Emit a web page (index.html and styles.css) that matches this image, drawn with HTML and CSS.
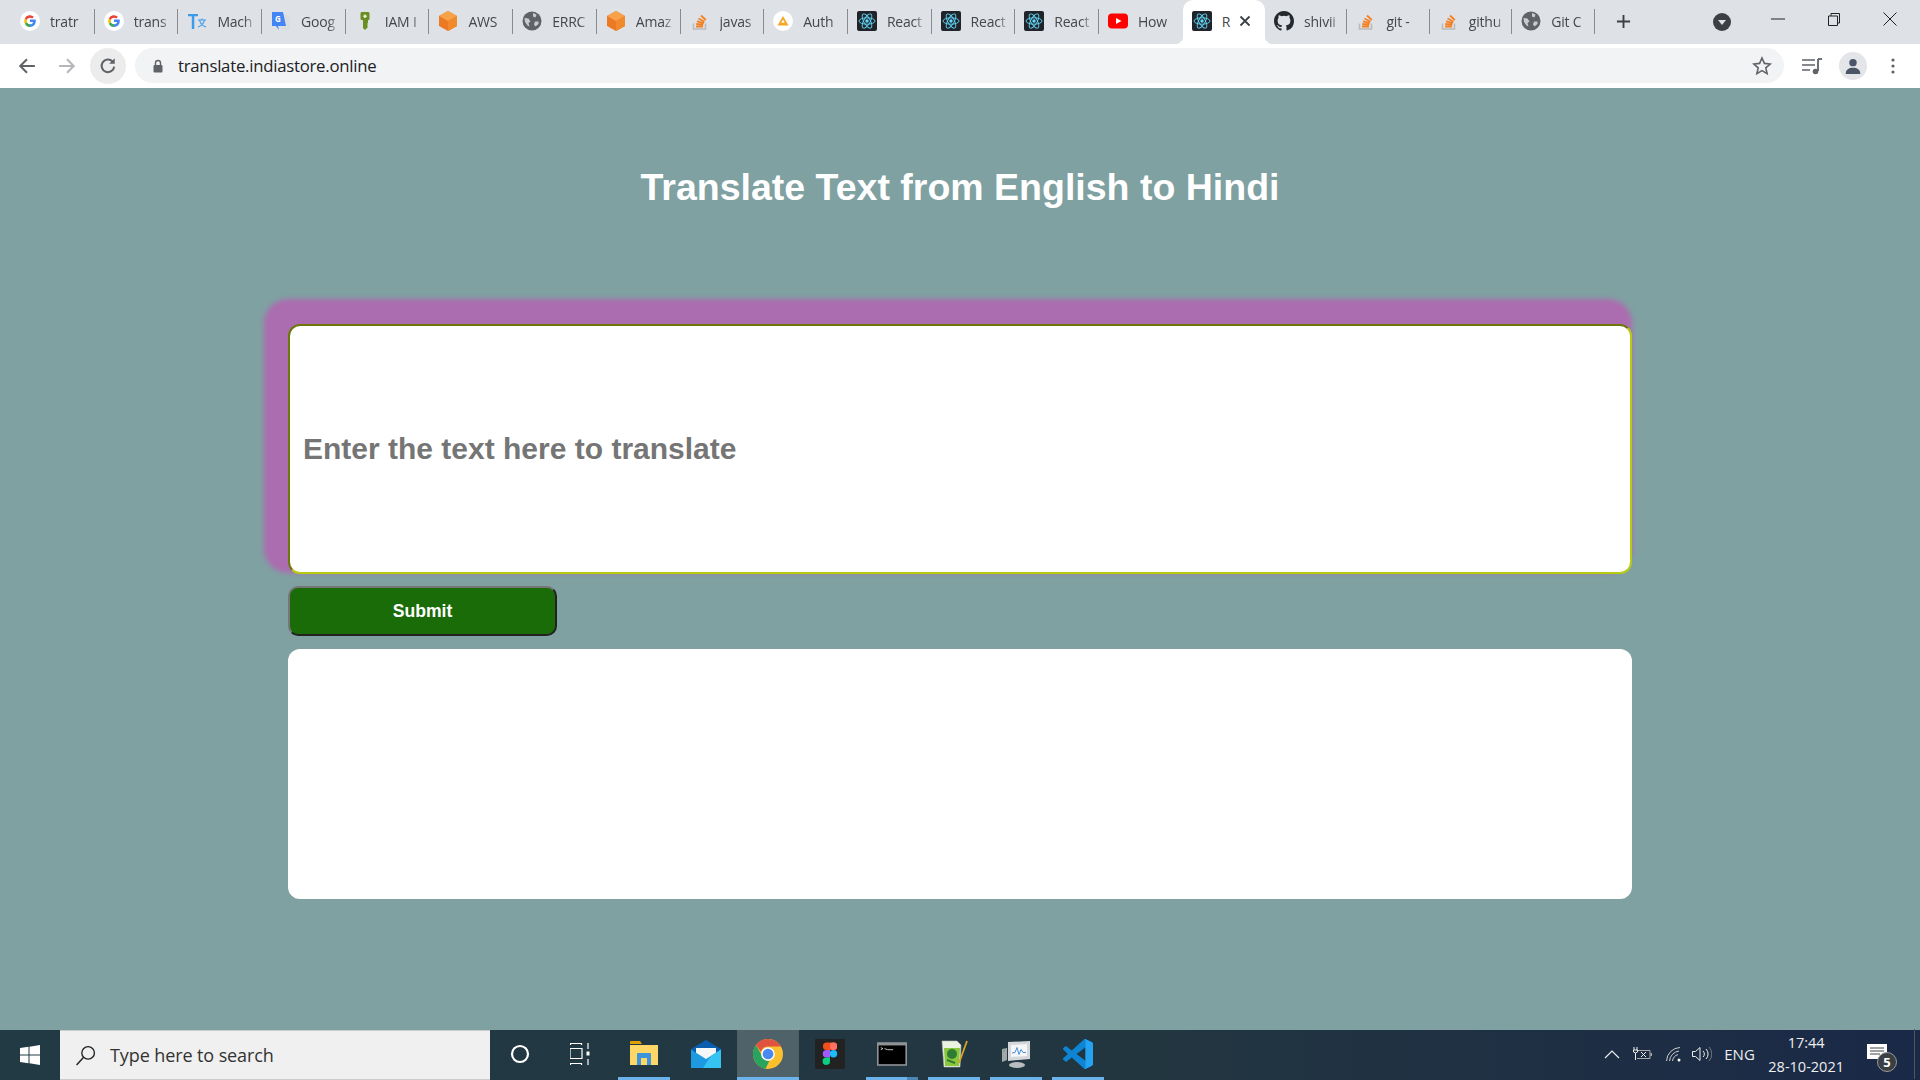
FILE: index.html
```html
<!DOCTYPE html>
<html lang="en">
<head>
    <meta charset="UTF-8">
    <title>Translate</title>
    <link rel="stylesheet" href="styles.css">
</head>
<body>
    <!-- shared favicons -->
    <svg class="defs" width="0" height="0">
        <symbol id="fav-google" viewBox="0 0 20 20">
            <circle cx="10" cy="10" r="10" fill="#fff"/>
            <path d="M15.600 8.600H10v2.400h3.200c-.4 1.500-1.600 2.300-3.200 2.300V16c3.300 0 5.800-2.300 5.800-5.900 0-.5 0-1-.2-1.500z" fill="#4285f4"/>
            <path d="M10 13.300c-1.500 0-2.700-1-3.100-2.300L4.800 12.700C5.800 14.700 7.700 16 10 16z" fill="#34a853"/>
            <path d="M6.900 11a3.400 3.400 0 0 1 0-2.100L4.800 7.300a6 6 0 0 0 0 5.400z" fill="#fbbc05"/>
            <path d="M10 6.700c.9 0 1.600.3 2.200.8l1.700-1.700A5.800 5.800 0 0 0 4.800 7.300l2.100 1.600C7.300 7.600 8.500 6.700 10 6.700z" fill="#ea4335"/>
        </symbol>
        <symbol id="fav-globe" viewBox="0 0 20 20">
            <circle cx="10" cy="10" r="9.500" fill="#5f6368"/>
            <path d="M2.500 7l4 .5 2 3-2 1.500 1 3.500-2-1-2.500-3.500zM11 2l3.500 1.500-1 3-2.500-1zM13 10.500h3.500l0 2.500-3 2.500-1.500-2z" fill="#c9cbcf"/>
        </symbol>
        <symbol id="fav-cube" viewBox="0 0 20 20">
            <path d="M10 0l9 5v10l-9 5-9-5V5z" fill="#ec7a24"/>
            <path d="M10 0l9 5-9 5-9-5z" fill="#f7a24a"/>
            <path d="M10 10l9-5v10l-9 5z" fill="#f08a2c"/>
        </symbol>
        <symbol id="fav-so" viewBox="0 0 20 20">
            <path d="M3.500 12.500V18h12v-5.500" fill="none" stroke="#bcbbbb" stroke-width="1.600"/>
            <path d="M6 15.500h7M6.300 13l7 .6M7 10.300l6.800 1.800M8.500 7.500l6 3.300M11 4.500l4.800 4.500" stroke="#f48024" stroke-width="1.800" fill="none"/>
        </symbol>
        <symbol id="fav-react" viewBox="0 0 20 20">
            <rect width="20" height="20" rx="2" fill="#20232a"/>
            <circle cx="10" cy="10" r="1.700" fill="#61dafb"/>
            <g fill="none" stroke="#61dafb" stroke-width=".9">
                <ellipse cx="10" cy="10" rx="8" ry="3.200"/>
                <ellipse cx="10" cy="10" rx="8" ry="3.200" transform="rotate(60 10 10)"/>
                <ellipse cx="10" cy="10" rx="8" ry="3.200" transform="rotate(120 10 10)"/>
            </g>
        </symbol>
    </svg>

    <!-- Chrome tab strip -->
    <div class="tabstrip">
        <div class="tab"><svg class="fav"><use href="#fav-google"/></svg><span class="tab-title">tratr</span></div>
        <div class="tab"><svg class="fav"><use href="#fav-google"/></svg><span class="tab-title">trans</span></div>
        <div class="tab">
            <svg class="fav" viewBox="0 0 20 20"><path d="M1 3h10v2.200H7.300V18H4.800V5.200H1z" fill="#3d9be9"/><path d="M11 9h8M15 7.500V9M12.500 9c.8 3.500 3.500 6 6.500 7M17.500 9c-.8 3.500-3.500 6-6.500 7" stroke="#3d9be9" stroke-width="1.100" fill="none"/></svg>
            <span class="tab-title">Mach</span>
        </div>
        <div class="tab">
            <svg class="fav" viewBox="0 0 20 20"><path d="M8 4h11v15H10z" fill="#dadce0"/><path d="M1 1h11l3 14H7l1 4-3-4H1z" fill="#4285f4"/><text x="4" y="10.500" class="fav-letter">G</text></svg>
            <span class="tab-title">Goog</span>
        </div>
        <div class="tab">
            <svg class="fav" viewBox="0 0 20 20"><path d="M7 1h6c1 0 1.500.6 1.500 1.500v5c0 1-.5 1.500-1.500 1.700V12l-1 1 1 1-1 1 1 1-3 3-2-2V9.200C6 9 5.500 8.500 5.500 7.500v-5C5.500 1.600 6 1 7 1z" fill="#6b8e23"/><path d="M9.200 3.500h1.600v1h1v1.400h-1v1H9.200v-1h-1V4.500h1z" fill="#e8f0d8"/></svg>
            <span class="tab-title">IAM I</span>
        </div>
        <div class="tab"><svg class="fav"><use href="#fav-cube"/></svg><span class="tab-title">AWS</span></div>
        <div class="tab"><svg class="fav"><use href="#fav-globe"/></svg><span class="tab-title">ERRC</span></div>
        <div class="tab"><svg class="fav"><use href="#fav-cube"/></svg><span class="tab-title">Amaz</span></div>
        <div class="tab"><svg class="fav"><use href="#fav-so"/></svg><span class="tab-title">javas</span></div>
        <div class="tab">
            <svg class="fav" viewBox="0 0 20 20"><circle cx="10" cy="10" r="10" fill="#fff"/><path d="M10 5l5.500 9.500h-11z" fill="#f5a623"/><path d="M10 8.500l1.700 3.200H8.300z" fill="#fff"/></svg>
            <span class="tab-title">Auth</span>
        </div>
        <div class="tab"><svg class="fav"><use href="#fav-react"/></svg><span class="tab-title">React</span></div>
        <div class="tab"><svg class="fav"><use href="#fav-react"/></svg><span class="tab-title">React</span></div>
        <div class="tab"><svg class="fav"><use href="#fav-react"/></svg><span class="tab-title">React</span></div>
        <div class="tab tab-before-active">
            <svg class="fav" viewBox="0 0 20 20"><rect y="2.500" width="20" height="15" rx="4" fill="#f00"/><path d="M8 7l5.500 3L8 13z" fill="#fff"/></svg>
            <span class="tab-title">How</span>
        </div>
        <div class="tab tab-active">
            <svg class="fav"><use href="#fav-react"/></svg>
            <span class="tab-title">R</span>
            <svg class="tab-close" viewBox="0 0 12 12"><path d="M1.500 1.500l9 9M10.500 1.500l-9 9" stroke="#3c4043" stroke-width="1.800"/></svg>
        </div>
        <div class="tab tab-after">
            <svg class="fav" viewBox="0 0 16 16"><path fill="#24292e" d="M8 0C3.580 0 0 3.580 0 8c0 3.540 2.290 6.530 5.470 7.590.4.070.55-.17.55-.38v-1.340c-2.230.48-2.700-1.070-2.700-1.070-.36-.93-.890-1.170-.89-1.170-.730-.5.050-.49.050-.49.800.06 1.230.83 1.230.83.710 1.220 1.870.87 2.330.66.070-.52.280-.87.510-1.070-1.780-.2-3.640-.89-3.640-3.950 0-.87.310-1.590.820-2.150-.08-.2-.360-1.020.08-2.120 0 0 .670-.21 2.200.82a7.600 7.600 0 0 1 4 0c1.530-1.040 2.200-.82 2.200-.82.440 1.100.16 1.920.08 2.120.51.560.82 1.270.82 2.150 0 3.070-1.870 3.750-3.650 3.950.29.250.54.730.54 1.480v2.200c0 .210.150.460.550.380A8 8 0 0 0 16 8c0-4.420-3.580-8-8-8z"/></svg>
            <span class="tab-title">shivii</span>
        </div>
        <div class="tab tab-after"><svg class="fav"><use href="#fav-so"/></svg><span class="tab-title">git -</span></div>
        <div class="tab tab-after"><svg class="fav"><use href="#fav-so"/></svg><span class="tab-title">githu</span></div>
        <div class="tab tab-after"><svg class="fav"><use href="#fav-globe"/></svg><span class="tab-title">Git C</span></div>
        <div class="newtab"><svg viewBox="0 0 16 16"><path d="M8 1v14M1 8h14" stroke="#3c4043" stroke-width="2"/></svg></div>
        <div class="strip-right">
            <svg class="tabsearch" viewBox="0 0 18 18"><circle cx="9" cy="9" r="9" fill="#3c4043"/><path d="M5 7h8l-4 5z" fill="#dee1e6"/></svg>
            <div class="winctl">
                <svg viewBox="0 0 14 14"><path d="M0 7h14" stroke="#222" stroke-width="1"/></svg>
                <svg viewBox="0 0 14 14"><path d="M1.500 4h9v9.500h-9zM4 4V1.500h8.500V11h-2" fill="none" stroke="#222"/></svg>
                <svg viewBox="0 0 14 14"><path d="M.5.500l13 13M13.500.500l-13 13" stroke="#222"/></svg>
            </div>
        </div>
    </div>

    <!-- Chrome toolbar -->
    <div class="toolbar">
        <svg class="nav" viewBox="0 0 16 16"><path d="M15 8H2M8 2L2 8l6 6" fill="none" stroke="#5f6368" stroke-width="1.800"/></svg>
        <svg class="nav nav-fwd" viewBox="0 0 16 16"><path d="M1 8h13M8 2l6 6-6 6" fill="none" stroke="#b4b6b9" stroke-width="1.800"/></svg>
        <div class="reload"><svg viewBox="0 0 16 16"><path d="M13.500 8.500A5.600 5.600 0 1 1 12 4" fill="none" stroke="#5f6368" stroke-width="1.800"/><path d="M14 1v5H9z" fill="#5f6368"/></svg></div>
        <div class="omnibox">
            <svg class="lock" viewBox="0 0 12 14"><path d="M3.500 6V4a2.500 2.500 0 0 1 5 0v2" fill="none" stroke="#5f6368" stroke-width="1.400"/><rect x="1.500" y="6" width="9" height="7.500" rx="1" fill="#5f6368"/></svg>
            <span class="url">translate.indiastore.online</span>
            <svg class="star" viewBox="0 0 20 20"><path d="M10 2l2.400 5.400 5.800.6-4.400 3.900 1.300 5.700L10 14.600l-5.100 3 1.300-5.700L1.800 8l5.800-.6z" fill="none" stroke="#5f6368" stroke-width="1.600"/></svg>
        </div>
        <svg class="media" viewBox="0 0 20 18"><path d="M0 3h13M0 8h13M0 13h8" stroke="#5f6368" stroke-width="1.600"/><path d="M16 2v12" stroke="#5f6368" stroke-width="1.800"/><path d="M16 2h4" stroke="#5f6368" stroke-width="1.800"/><circle cx="13.500" cy="14.500" r="2.800" fill="#5f6368"/></svg>
        <div class="avatar"><svg viewBox="0 0 16 16"><circle cx="8" cy="5" r="3.300" fill="#4a5568"/><path d="M1.500 15c0-4 3-5.500 6.500-5.500S14.500 11 14.500 15z" fill="#4a5568"/></svg></div>
        <svg class="kebab" viewBox="0 0 4 16"><circle cx="2" cy="2" r="1.600" fill="#5f6368"/><circle cx="2" cy="8" r="1.600" fill="#5f6368"/><circle cx="2" cy="14" r="1.600" fill="#5f6368"/></svg>
    </div>

    <!-- Translate page -->
    <main class="page">
        <h1 class="page-title">Translate Text from English to Hindi</h1>
        <form class="translate-form" onsubmit="return false">
            <input class="text-input" type="text" placeholder="Enter the text here to translate">
            <button class="submit-btn" type="submit">Submit</button>
            <div class="output"></div>
        </form>
    </main>

    <!-- Windows taskbar -->
    <div class="taskbar">
        <div class="start"><svg viewBox="0 0 20 20"><path d="M0 3l8.500-1.200v7.700H0zM9.500 1.700L20 0v9.500H9.500zM0 10.500h8.500v7.700L0 17zM9.500 10.500H20V20L9.500 18.300z" fill="#fff"/></svg></div>
        <div class="search">
            <svg viewBox="0 0 20 20"><circle cx="12.500" cy="7.500" r="6" fill="none" stroke="#222" stroke-width="1.300"/><path d="M8 12L1.500 19" stroke="#222" stroke-width="1.400"/></svg>
            <span>Type here to search</span>
        </div>
        <div class="task-slot task-sys">
            <svg class="task-icon task-small" viewBox="0 0 20 20"><circle cx="10" cy="10" r="8" fill="none" stroke="#fff" stroke-width="2.200"/></svg>
        </div>
        <div class="task-slot task-sys">
            <svg class="task-icon task-small" viewBox="0 0 20 22"><path d="M0 .5h12M0 5.500h12v10H0zM0 20.500h12M.5 0v2M11.500 0v2M.5 20v2M11.500 20v2M18 0v6M18 16v6" fill="none" stroke="#fff" stroke-width="1.200"/><rect x="16.500" y="8.500" width="3" height="4" fill="#fff"/></svg>
        </div>
        <div class="task-slot running first-app">
            <svg class="task-icon" viewBox="0 0 30 30"><path d="M1 3a1 1 0 0 1 1-1h9l2 3H1z" fill="#e0a000"/><path d="M1 6h28v20H1z" fill="#ffd766"/><path d="M8 26V15a1 1 0 0 1 1-1h12a1 1 0 0 1 1 1v11h-4v-7h-6v7z" fill="#3b94dc"/></svg>
        </div>
        <div class="task-slot">
            <svg class="task-icon" viewBox="0 0 30 30"><path d="M15 1L0 10v3h30v-3z" fill="#0a5eb0"/><path d="M5 9h20v6l-10 6-10-6z" fill="#f4f6f8"/><path d="M0 10.500V29h30V10.500L15 20z" fill="#1e9be0"/><path d="M30 10.500V29H12l8-12z" fill="#35c3f2"/></svg>
        </div>
        <div class="task-slot running active">
            <svg class="task-icon" viewBox="0 0 28 28"><circle cx="14" cy="14" r="14" fill="#fbc02d"/><path d="M14 0a14 14 0 0 1 12.100 7H14a7 7 0 0 0-6.700 5L2.700 5.600A14 14 0 0 1 14 0z" fill="#e0533f"/><path d="M2.700 5.600l6 10.500a6.500 6.500 0 0 0 6.600 4.300L11.700 27.800A14 14 0 0 1 2.700 5.600z" fill="#2aa35f"/><circle cx="14" cy="14" r="6.400" fill="#fff"/><circle cx="14" cy="14" r="5" fill="#4b88ef"/></svg>
        </div>
        <div class="task-slot">
            <svg class="task-icon" viewBox="0 0 30 30"><rect width="30" height="30" rx="1" fill="#222"/><rect x="8" y="3.500" width="14" height="7.500" rx="3.500" fill="#f24e1e"/><rect x="15" y="3.500" width="7" height="7.500" rx="3" fill="#ff7262"/><path d="M11.500 11H15v7.500h-3.500a3.700 3.700 0 0 1 0-7.500z" fill="#a259ff"/><circle cx="18.500" cy="14.700" r="3.700" fill="#1abcfe"/><path d="M11.500 18.500H15V22a3.700 3.700 0 1 1-3.500-3.500z" fill="#0acf83"/></svg>
        </div>
        <div class="task-slot running stacked">
            <svg class="task-icon" viewBox="0 0 28 28"><rect y="3" width="28" height="22" fill="#8f9396"/><rect x="1.500" y="6" width="25" height="17.500" fill="#000"/><path d="M3.500 8l2 1-2 1M7 9l3 1h5" stroke="#ddd" stroke-width=".8" fill="none"/></svg>
        </div>
        <div class="task-slot running">
            <svg class="task-icon" viewBox="0 0 30 30"><path d="M3 2h15l4 4-1 22H5z" fill="#e9f3df" stroke="#b5b5b5" stroke-width=".6"/><path d="M5 9h16l-1 18H6z" fill="#8cc63f"/><circle cx="13" cy="15" r="5" fill="#2f7d32"/><path d="M8 21l8 3" stroke="#2f7d32" stroke-width="2"/><path d="M20 24L28 2" stroke="#d8a520" stroke-width="1.800"/></svg>
        </div>
        <div class="task-slot running">
            <svg class="task-icon" viewBox="0 0 30 30"><path d="M7 3l22-1v18L7 22z" fill="#d4d8db"/><path d="M10 6l16-.8V17L10 18z" fill="#f4f6f8"/><path d="M11 14l3-.5 2-5 2 7 2-5 2 3h3" fill="none" stroke="#4a90d9"/><ellipse cx="16" cy="26" rx="8" ry="3" fill="#b9bdc1"/><path d="M1 10l5-1v12l-5 2z" fill="#a5a8aa"/><path d="M2 12l2-.4" stroke="#4caf50"/></svg>
        </div>
        <div class="task-slot running">
            <svg class="task-icon" viewBox="0 0 100 100"><path d="M96.500 10.800L75.900.9a6.200 6.200 0 0 0-7.100 1.200L29.300 38.100 12.100 25c-1.600-1.200-3.800-1.100-5.300.2L1.300 30.300a4 4 0 0 0 0 5.900L16.200 50 1.300 63.600a4 4 0 0 0 0 5.900l5.500 5a4.100 4.100 0 0 0 5.300.2l17.200-13L68.800 97.700a6.200 6.200 0 0 0 7.100 1.200l20.600-9.900a6.200 6.200 0 0 0 3.500-5.600V16.400a6.200 6.200 0 0 0-3.500-5.600zM75 72.700L45 50l30-22.700z" fill="#0e84d4"/><path d="M68.800 2.100a6.200 6.200 0 0 1 7.100-1.200l20.600 9.900a6.200 6.200 0 0 1 3.500 5.600v67a6.200 6.200 0 0 1-3.500 5.600l-20.600 9.900a6.200 6.200 0 0 1-7.100-1.200c2.300 2.300 6.200.7 6.200-2.600V4.700c0-3.300-3.900-4.900-6.200-2.600z" fill="#25a3f2"/></svg>
        </div>
        <div class="tray">
            <svg class="tray-icon" viewBox="0 0 16 10"><path d="M1 9l7-7 7 7" fill="none" stroke="#eee" stroke-width="1.200"/></svg>
            <svg class="tray-icon tray-batt" viewBox="0 0 20 14"><path d="M1 0v3M4 0v3M.5 3h4v2l-2 1-2-1zM2.500 6v7" fill="none" stroke="#eee"/><path d="M5 3.500h12v8H4" fill="none" stroke="#aaa"/><path d="M8 5l5 5M13 5l-5 5" stroke="#eee"/><rect x="17.500" y="6" width="1.500" height="3" fill="#aaa"/></svg>
            <svg class="tray-icon tray-wifi" viewBox="0 0 16 16"><path d="M.5 15A14 14 0 0 1 14 1.500M3.500 15A11 11 0 0 1 13 5M6.500 15A8 8 0 0 1 12 8.500" fill="none" stroke="#ccc"/><circle cx="13" cy="14" r="1.500" fill="#fff"/></svg>
            <svg class="tray-icon tray-vol" viewBox="0 0 20 16"><path d="M.5 5.500h3L8 1.500v13l-4.500-4h-3z" fill="none" stroke="#eee"/><path d="M11 5a4 4 0 0 1 0 6M14 3a7 7 0 0 1 0 10" fill="none" stroke="#eee"/><path d="M17 1a10 10 0 0 1 0 14" fill="none" stroke="#777"/></svg>
            <span class="tray-lang">ENG</span>
            <div class="clock"><span>17:44</span><span>28-10-2021</span></div>
            <div class="notify">
                <svg viewBox="0 0 20 18"><path d="M0 0h20v15H0z" fill="#fff"/><path d="M3 4h14M3 7h14M3 10h10" stroke="#444"/></svg>
                <span class="notify-badge">5</span>
            </div>
            <div class="show-desktop"></div>
        </div>
    </div>
</body>
</html>
```

FILE: styles.css
```css
/* Common Styles */
* {
    box-sizing: border-box;
}

html, body {
    height: 100%;
}

body {
    margin: 0;
    display: flex;
    flex-direction: column;
    height: 1080px;
    overflow: hidden;
    font-family: 'Liberation Sans', Arial, sans-serif;
    background-color: #7fa1a2;
}

.defs {
    position: absolute;
}

/* Tab strip */
.tabstrip {
    display: flex;
    align-items: center;
    height: 44px;
    padding-left: 11px;
    background-color: #dee1e6;
    font-family: 'Open Sans', sans-serif;
}

.tab {
    display: flex;
    align-items: center;
    flex: none;
    width: 83.7px;
    height: 25px;
    margin-bottom: 2px;
    padding: 0 4px 0 9px;
    border-right: 1px solid #888b8f;
}

.tab-after {
    width: 82.4px;
}

.tab-before-active {
    border-right: none;
}

.tab-active {
    position: relative;
    width: 82.4px;
    height: 44px;
    margin-bottom: 0;
    padding: 0 14px 2px 9px;
    border-right: none;
    border-radius: 10px 10px 0 0;
    background-color: #fff;
}

/* little flares at the foot of the active tab */
.tab-active::before,
.tab-active::after {
    content: "";
    position: absolute;
    bottom: 0;
    width: 8px;
    height: 8px;
}

.tab-active::before {
    left: -8px;
    background: radial-gradient(circle at 0 0, transparent 8px, #fff 8.5px);
}

.tab-active::after {
    right: -8px;
    background: radial-gradient(circle at 100% 0, transparent 8px, #fff 8.5px);
}

.fav {
    flex: none;
    width: 20px;
    height: 20px;
}

.fav-letter {
    font-size: 8px;
    font-weight: bold;
    fill: #fff;
}

.tab-title {
    flex: 1;
    min-width: 0;
    margin-left: 10px;
    white-space: nowrap;
    font-size: 14px;
    letter-spacing: -0.2px;
    color: #45474a;
    -webkit-mask-image: linear-gradient(90deg, #000 68%, transparent);
    mask-image: linear-gradient(90deg, #000 68%, transparent);
}

.tab-active .tab-title {
    -webkit-mask-image: none;
    mask-image: none;
}

.tab-close {
    flex: none;
    width: 12px;
    height: 12px;
}

.newtab {
    display: flex;
    align-items: center;
    justify-content: center;
    width: 58px;
    margin-bottom: 2px;
}

.newtab svg {
    width: 15px;
    height: 15px;
}

.strip-right {
    display: flex;
    align-items: center;
    flex: 1;
    justify-content: flex-end;
}

.tabsearch {
    width: 18px;
    height: 18px;
    margin-right: 40px;
}

.winctl {
    display: flex;
    align-items: center;
    gap: 42px;
    padding: 0 23px 6px 0;
}

.winctl svg {
    width: 14px;
    height: 14px;
}

/* Toolbar */
.toolbar {
    display: flex;
    align-items: center;
    height: 44px;
    padding: 0 0 1px 18px;
    background-color: #fff;
}

.nav {
    flex: none;
    width: 18px;
    height: 18px;
}

.nav-fwd {
    margin-left: 22px;
}

.reload {
    display: flex;
    align-items: center;
    justify-content: center;
    flex: none;
    width: 36px;
    height: 36px;
    margin-left: 14px;
    border-radius: 50%;
    background-color: #ececec;
}

.reload svg {
    width: 18px;
    height: 18px;
}

.omnibox {
    display: flex;
    align-items: center;
    flex: none;
    width: 1649px;
    height: 35px;
    margin-left: 9px;
    padding: 0 12px 0 17px;
    border-radius: 18px;
    background-color: #f1f3f4;
}

.lock {
    width: 12px;
    height: 14px;
}

.url {
    flex: 1;
    margin-left: 14px;
    font-family: 'Open Sans', sans-serif;
    font-size: 16.75px;
    letter-spacing: -0.25px;
    color: #202124;
}

.star {
    width: 20px;
    height: 20px;
}

.media {
    flex: none;
    width: 20px;
    height: 18px;
    margin-left: 17.5px;
}

.avatar {
    display: flex;
    align-items: center;
    justify-content: center;
    flex: none;
    width: 28px;
    height: 28px;
    margin-left: 17px;
    border-radius: 50%;
    background-color: #e3e5e9;
}

.avatar svg {
    width: 18px;
    height: 18px;
}

.kebab {
    flex: none;
    width: 4px;
    height: 16px;
    margin-left: 24px;
}

/* Page */
.page {
    flex: 1;
    display: flex;
    flex-direction: column;
    align-items: center;
    background-color: #7fa1a2;
}

.page-title {
    margin: 74px 0 0;
    font-size: 37.5px;
    line-height: 50px;
    font-weight: bold;
    color: #fff;
}

.translate-form {
    display: flex;
    flex-direction: column;
    align-items: flex-start;
    width: 1344px;
    margin-top: 112px;
}

.text-input {
    width: 100%;
    height: 250px;
    padding: 0 13px;
    border: 2px inset #b8cb12;
    border-radius: 12px;
    outline: none;
    background-color: #fff;
    box-shadow: -12px -13px 5px 12px #ac6db0;
    font-family: 'Liberation Sans', Arial, sans-serif;
    font-size: 30px;
    font-weight: bold;
}

.text-input::placeholder {
    color: #757575;
}

.submit-btn {
    width: 269px;
    height: 50px;
    margin-top: 12px;
    border: 2px solid;
    border-color: #767676 #222 #222 #767676;
    border-radius: 10px;
    background-color: #196c07;
    color: #fff;
    font-family: 'Liberation Sans', Arial, sans-serif;
    font-size: 17.6px;
    font-weight: bold;
}

.output {
    width: 100%;
    height: 250px;
    margin-top: 13px;
    border-radius: 12px;
    background-color: #fff;
}

/* Taskbar */
.taskbar {
    display: flex;
    align-items: stretch;
    height: 50px;
    background: linear-gradient(90deg, #213a44, #223640 60%, #1a2947);
    font-family: 'Open Sans', sans-serif;
}

.start {
    display: flex;
    align-items: center;
    justify-content: center;
    flex: none;
    width: 60px;
}

.start svg {
    width: 20px;
    height: 20px;
}

.search {
    display: flex;
    align-items: center;
    flex: none;
    width: 430px;
    padding-left: 15px;
    border-top: 1px solid #ccc;
    border-bottom: 1px solid #ccc;
    background-color: #f0f0f0;
    font-size: 18px;
    letter-spacing: -0.1px;
    color: #333;
}

.search svg {
    width: 21px;
    height: 21px;
    margin-right: 14px;
}

.task-slot {
    position: relative;
    display: flex;
    align-items: center;
    justify-content: center;
    flex: none;
    width: 62px;
    padding-bottom: 3px;
}

.task-sys {
    width: 60px;
}

.first-app {
    margin-left: 3px;
}

.running::after {
    content: "";
    position: absolute;
    left: 5px;
    right: 5px;
    bottom: 0;
    height: 3px;
    background-color: #6cb2eb;
}

.active {
    background-color: #4f6169;
}

.active::after {
    left: 0;
    right: 0;
}

.stacked::after {
    background: linear-gradient(90deg, #6cb2eb 78%, #4d86b4 78%);
}

.task-icon {
    width: 30px;
    height: 30px;
}

.task-small {
    width: 20px;
    height: 22px;
}

.tray {
    display: flex;
    align-items: center;
    flex: 1;
    justify-content: flex-end;
    color: #eee;
    padding-bottom: 2px;
}

.tray-icon {
    width: 16px;
    height: 12px;
    margin-right: 13px;
}

.tray-batt {
    width: 20px;
    height: 14px;
}

.tray-wifi {
    width: 16px;
    height: 16px;
    margin-right: 10px;
}

.tray-vol {
    width: 20px;
    height: 16px;
    margin-right: 12px;
}

.tray-lang {
    font-size: 15px;
    margin-right: 13.5px;
}

.clock {
    display: flex;
    flex-direction: column;
    align-items: center;
    gap: 5px;
    margin-right: 23px;
    font-size: 14.5px;
    line-height: 19px;
}

.notify {
    position: relative;
    width: 22px;
    height: 20px;
    margin-right: 25px;
}

.notify svg {
    width: 20px;
    height: 18px;
}

.notify-badge {
    position: absolute;
    left: 10px;
    top: 8px;
    width: 20px;
    height: 20px;
    border: 1px solid #999;
    border-radius: 50%;
    background-color: #3a3f44;
    color: #fff;
    font-size: 13px;
    font-weight: bold;
    line-height: 18px;
    text-align: center;
}

.show-desktop {
    width: 1px;
    height: 50px;
    margin-right: 5px;
    background-color: #555;
}
```
